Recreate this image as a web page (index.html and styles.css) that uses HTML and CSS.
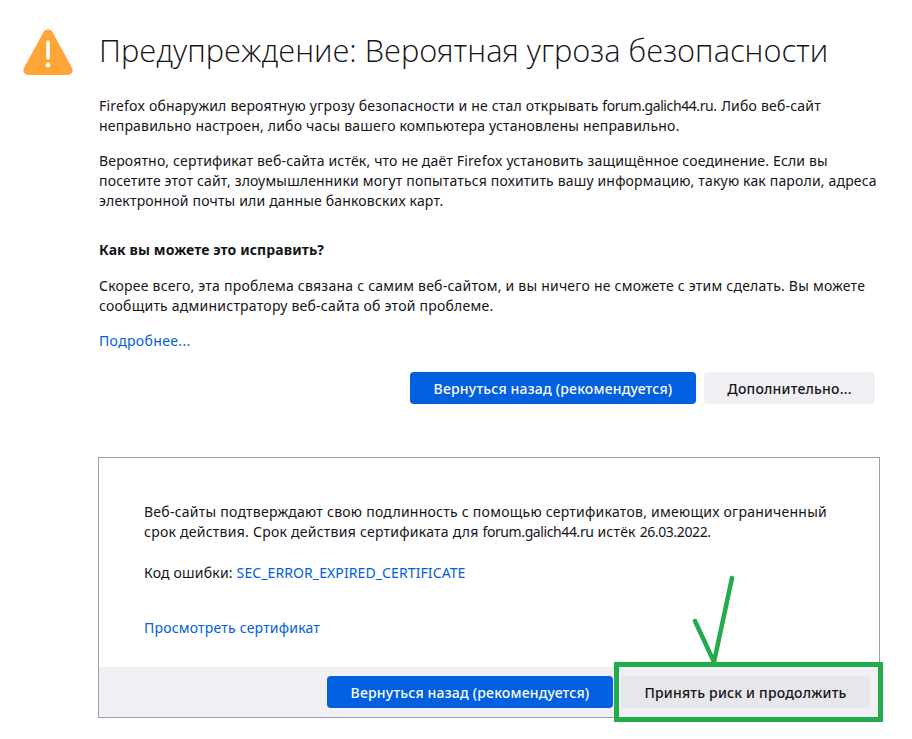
FILE: index.html
```html
<!doctype html>
<html lang="ru">
  <head>
    <meta charset="UTF-8" />
    <title>Предупреждение: Вероятная угроза безопасности</title>
    <link rel="stylesheet" href="styles.css">
  </head>
  <body>
    <div class="page">
      <svg class="warn-icon" viewBox="0 0 50 48" width="50" height="48">
        <path d="M25 1.500c-2 0-3.600 1-4.600 2.800L1.200 39.600C-.9 43.500 1.700 47 5.500 47h39c3.800 0 6.400-3.500 4.300-7.400L29.600 4.300C28.600 2.500 27 1.500 25 1.500z" fill="#ffa436"/>
        <path d="M25 14v16" stroke="#fff" stroke-width="3.600" stroke-linecap="round" fill="none"/>
        <circle cx="25" cy="37" r="2.400" fill="#fff"/>
      </svg>
      <div class="content">
        <h1 class="title">Предупреждение: Вероятная угроза безопасности</h1>
        <p class="intro">Firefox обнаружил вероятную угрозу безопасности и не стал открывать <span class="lat">forum.galich44.ru</span>. Либо веб-сайт<br>неправильно настроен, либо часы вашего компьютера установлены неправильно.</p>
        <p class="para">Вероятно, сертификат веб-сайта истёк, что не даёт Firefox установить защищённое соединение. Если вы<br>посетите этот сайт, злоумышленники могут попытаться похитить вашу информацию, такую как пароли, адреса<br>электронной почты или данные банковских карт.</p>
        <h2 class="subtitle">Как вы можете это исправить?</h2>
        <p class="para-fix">Скорее всего, эта проблема связана с самим веб-сайтом, и вы ничего не сможете с этим сделать. Вы можете<br>сообщить администратору веб-сайта об этой проблеме.</p>
        <a class="link more" href="#">Подробнее...</a>
        <div class="actions">
          <button class="btn primary">Вернуться назад (рекомендуется)</button>
          <button class="btn secondary more-btn">Дополнительно...</button>
        </div>
        <div class="advanced">
          <div class="advanced-body">
            <p class="adv-text">Веб-сайты подтверждают свою подлинность с помощью сертификатов, имеющих ограниченный<br>срок действия. Срок действия сертификата для <span class="lat">forum.galich44.ru</span> истёк <span class="lat">26.03.2022</span>.</p>
            <p class="adv-code">Код ошибки: <a class="link err-code" href="#">SEC_ERROR_EXPIRED_CERTIFICATE</a></p>
            <a class="link view-cert" href="#">Просмотреть сертификат</a>
          </div>
          <div class="advanced-foot">
            <button class="btn primary">Вернуться назад (рекомендуется)</button>
            <button class="btn secondary risk-btn">Принять риск и продолжить</button>
          </div>
        </div>
      </div>
      <!-- зелёная пометка поверх скриншота -->
      <div class="mark-box"></div>
      <svg class="mark-check" viewBox="0 0 50 90" width="50" height="90">
        <path d="M5 47L24 88L42 4" stroke="#22ac4c" stroke-width="4.500" fill="none" stroke-linecap="round"/>
      </svg>
    </div>
  </body>
</html>
```
FILE: styles.css
```css
* {
  box-sizing: border-box;
}
html,
body {
  margin: 0;
  padding: 0;
  background: #fff;
}
.page {
  position: relative;
  width: 912px;
  height: 739px;
  overflow: hidden;
  display: flex;
  align-items: flex-start;
  padding: 28px 0 0 23px;
  font-family: "Noto Sans", "Open Sans", sans-serif;
  font-size: 14px;
  line-height: 20px;
  color: #15141a;
}
.warn-icon {
  flex: none;
  margin-right: 26px;
}
.content {
  width: 782px;
}
.title {
  margin: 0 0 24px;
  font-family: "Open Sans", sans-serif;
  font-weight: 300;
  font-size: 30.800px;
  line-height: 44px;
}
.intro,
.para,
.para-fix {
  margin: 0 0 15px;
  white-space: nowrap;
  letter-spacing: 0.2px;
}
.para {
  margin-bottom: 29px;
  letter-spacing: 0.17px;
}
.lat {
  letter-spacing: -0.4px;
}
.subtitle {
  margin: 0 0 16px;
  font-size: 14px;
  line-height: 20px;
  font-weight: 700;
  letter-spacing: 0.1px;
}
.para-fix {
  letter-spacing: 0.23px;
}
.link {
  color: #0060df;
  text-decoration: none;
}
.more {
  display: block;
  letter-spacing: 0.35px;
}
.actions {
  display: flex;
  justify-content: flex-end;
  gap: 8px;
  margin: 21px 6px 53px 0;
}
.btn {
  height: 32px;
  border: 0;
  border-radius: 4px;
  font-family: inherit;
  font-size: 14px;
  font-weight: 500;
  letter-spacing: 0.2px;
  padding: 0;
}
.primary {
  width: 286px;
  background: #0060df;
  color: #fbfbfe;
}
.secondary {
  background: #f0f0f4;
  color: #15141a;
}
.more-btn {
  width: 171px;
}
.advanced {
  height: 261px;
  margin: 0 1px 0 -1px;
  border: 1px solid #a0a0a0;
  display: flex;
  flex-direction: column;
  justify-content: space-between;
}
.advanced-body {
  padding: 44px 45px 0;
  letter-spacing: 0.2px;
}
.adv-text {
  margin: 0 0 21px;
  white-space: nowrap;
  letter-spacing: 0.25px;
}
.adv-text .lat {
  letter-spacing: -0.4px;
}
.adv-code {
  margin: 0 0 35px;
}
.err-code {
  letter-spacing: 0.1px;
}
.view-cert {
  display: block;
}
.advanced-foot {
  height: 50px;
  background: #f0f0f4;
  display: flex;
  justify-content: flex-end;
  gap: 8px;
  padding: 9px 9px 0 0;
}
.risk-btn {
  width: 249px;
  background: #e6e6eb;
}
.mark-box {
  position: absolute;
  left: 614px;
  top: 662px;
  width: 269px;
  height: 60px;
  border: 5px solid #22ac4c;
}
.mark-check {
  position: absolute;
  left: 690px;
  top: 574px;
}
```
